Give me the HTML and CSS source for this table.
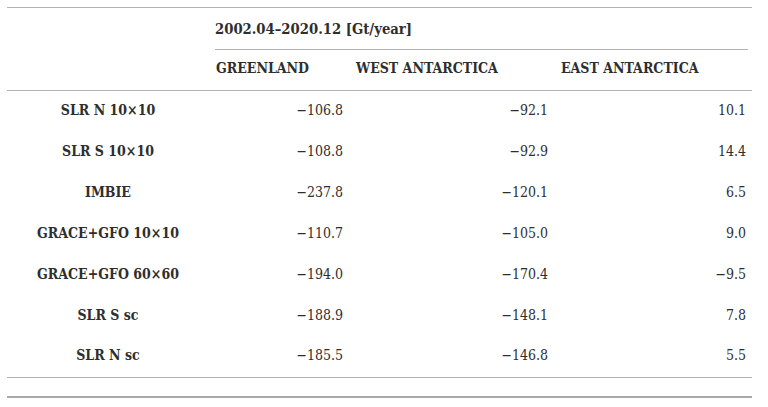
FILE: index.html
```html
<!DOCTYPE html>
<html lang="en">
<head>
<meta charset="utf-8">
<title>Mass change rates</title>
<link rel="stylesheet" href="styles.css">
</head>
<body>
<div class="wrap">
  <table class="data">
    <colgroup>
      <col class="c-label">
      <col class="c-gl">
      <col class="c-wa">
      <col class="c-ea">
    </colgroup>
    <thead>
      <tr class="h1">
        <th class="blank" rowspan="2"></th>
        <th class="span" colspan="3"><div class="span-inner">2002.04–2020.12 [Gt/year]</div></th>
      </tr>
      <tr class="h2">
        <th class="colhead">GREENLAND</th>
        <th class="colhead">WEST ANTARCTICA</th>
        <th class="colhead">EAST ANTARCTICA</th>
      </tr>
    </thead>
    <tbody>
      <tr><th class="label">SLR N 10×10</th><td>−106.8</td><td>−92.1</td><td>10.1</td></tr>
      <tr><th class="label">SLR S 10×10</th><td>−108.8</td><td>−92.9</td><td>14.4</td></tr>
      <tr><th class="label">IMBIE</th><td>−237.8</td><td>−120.1</td><td>6.5</td></tr>
      <tr><th class="label">GRACE+GFO 10×10</th><td>−110.7</td><td>−105.0</td><td>9.0</td></tr>
      <tr><th class="label">GRACE+GFO 60×60</th><td>−194.0</td><td>−170.4</td><td>−9.5</td></tr>
      <tr><th class="label">SLR S sc</th><td>−188.9</td><td>−148.1</td><td>7.8</td></tr>
      <tr><th class="label">SLR N sc</th><td>−185.5</td><td>−146.8</td><td>5.5</td></tr>
    </tbody>
  </table>
  <div class="foot"></div>
</div>
</body>
</html>
```

FILE: styles.css
```css
html, body {
  margin: 0;
  padding: 0;
  background: #ffffff;
}

body {
  font-family: "DejaVu Serif Condensed", "Liberation Serif", serif;
  font-stretch: condensed;
  font-size: 14px;
  color: #2e2e2e;
}

.wrap {
  padding: 7px 16px 0 7px;
}

.data {
  width: 745px;
  border-collapse: collapse;
  table-layout: fixed;
  border-top: 1px solid #b3b3b3;
  border-bottom: 1px solid #b3b3b3;
}

.c-label { width: 202px; }
.c-gl { width: 140px; }
.c-wa { width: 205px; }
.c-ea { width: 198px; }

th, td {
  padding: 0;
  vertical-align: middle;
  line-height: 18px;
}

.h1 { height: 42px; }
.h2 { height: 40px; }

.span {
  text-align: left;
  vertical-align: top;
  padding: 0 4px 0 6px;
  font-weight: bold;
  font-size: 14.7px;
}

.span-inner {
  padding-top: 12px;
  height: 29px;
  border-bottom: 1px solid #b3b3b3;
}

.colhead {
  text-align: left;
  padding: 0 7px 4px 7px;
  font-weight: bold;
  border-bottom: 1px solid #b3b3b3;
}

.blank {
  border-bottom: 1px solid #b3b3b3;
}

tbody tr {
  height: 41px;
}

.label {
  text-align: center;
  font-weight: bold;
  padding-bottom: 2px;
}

td {
  text-align: right;
  padding: 0 6px 2px 6px;
}

.foot {
  width: 745px;
  height: 18px;
  border-bottom: 2px solid #a8a8a8;
}
```
